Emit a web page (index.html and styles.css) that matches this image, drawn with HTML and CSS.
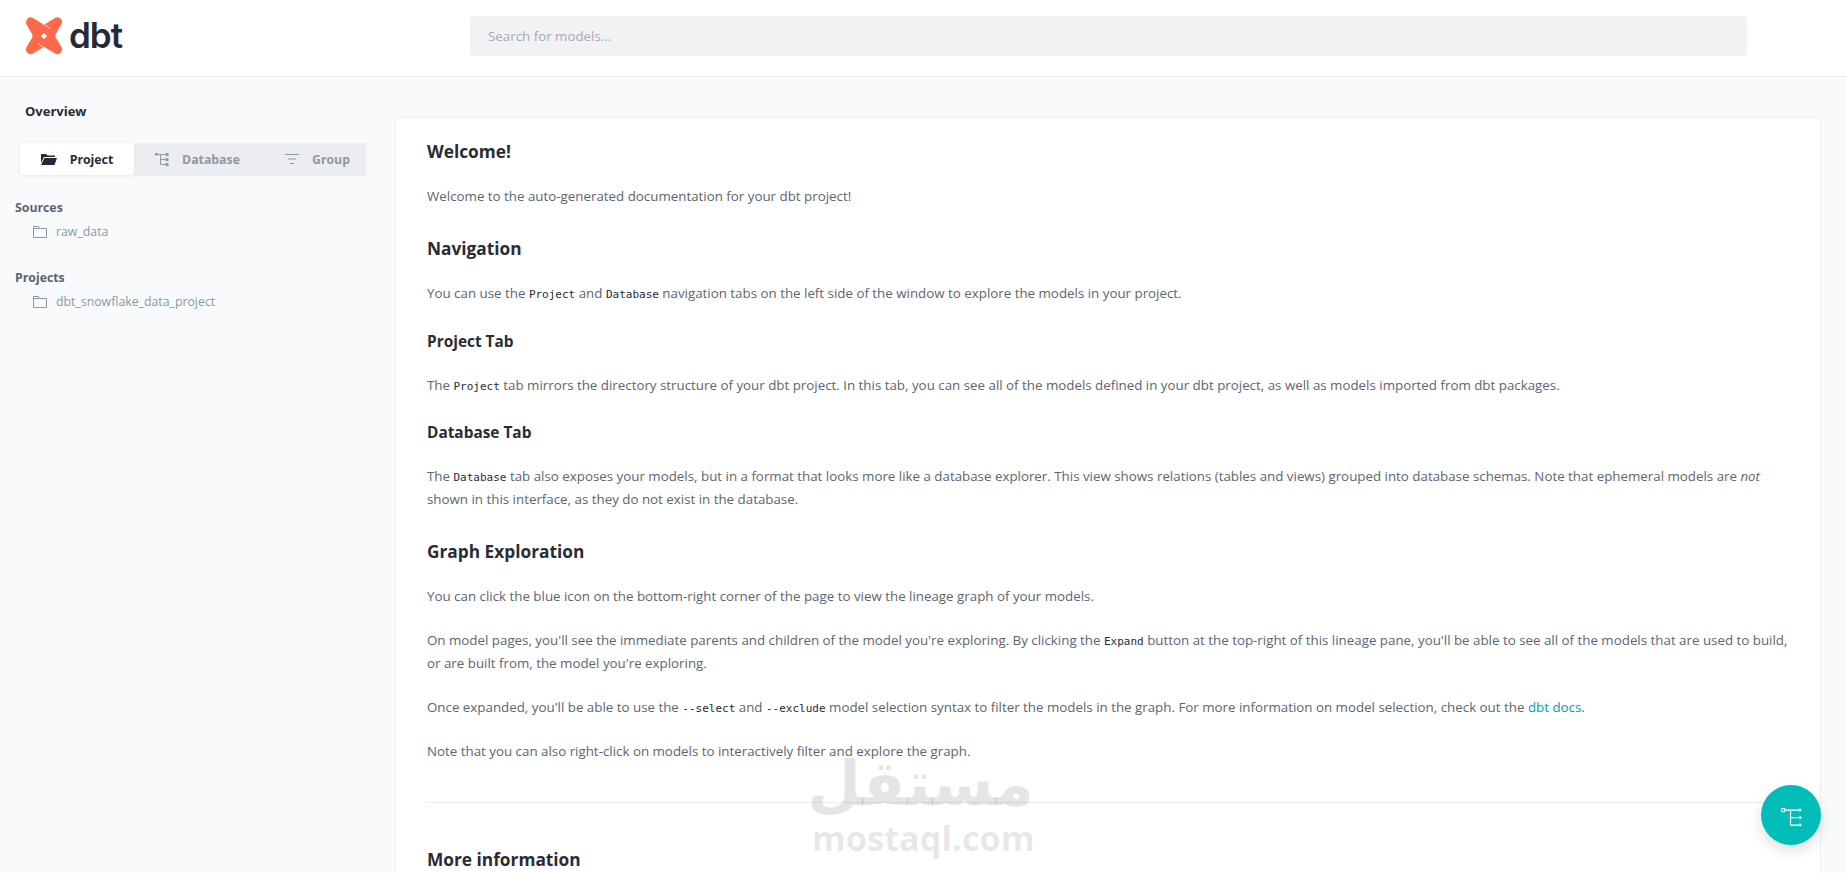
FILE: index.html
```html
<!DOCTYPE html>
<html lang="en">
<head>
    <meta charset="UTF-8">
    <meta name="viewport" content="width=device-width, initial-scale=1.0">
    <title>dbt Docs</title>
    <link rel="stylesheet" href="styles.css">
</head>
<body>
    <div class="app">
        <header class="topbar">
            <div class="brand">
                <svg class="brand-mark" viewBox="0 0 38 38" width="38" height="38">
                    <path fill="#ff694a" d="M3 1Q5.500-.5 8 1L17 6.500Q19 7.500 21 6.500L30 1Q33-.5 35.500 1.500 38 4 36.500 7L31 16.500Q30 19 31 21L36.500 30Q38 33.500 35.500 36 33 38 30 36.500L21 31Q19 30 17 31L8 36.500Q5 38 2.500 36 0 33.500 1.500 30L7 21Q8 19 7 17L1.500 7.500Q0 4 3 1Z"/>
                    <path fill="none" stroke="#fff" stroke-width=".9" d="M17 6.500Q22 8.500 25 11.500M21 31.500Q16 29.500 13 26.500"/>
                    <rect x="16.800" y="16.800" width="4.400" height="4.400" fill="#fff" transform="rotate(45 19 19)"/>
                </svg>
                <span class="brand-name">dbt</span>
            </div>
            <div class="search">Search for models...</div>
        </header>

        <div class="layout">
            <aside class="sidebar">
                <h5 class="overview">Overview</h5>
                <div class="tabs">
                    <div class="tab active">
                        <svg viewBox="0 0 16 12" width="16" height="12"><path fill="#262a38" d="M0 1h5l1.500 1.500H14V4H3L0 10z"/><path fill="#262a38" d="M3.500 5H16l-2.500 7H0z"/></svg>
                        <span>Project</span>
                    </div>
                    <div class="tab">
                        <svg viewBox="0 0 14 13" width="14" height="13"><g fill="none" stroke="#8c9aa3"><path d="M2 1.500h8M5.500 1.500v10h5M5.500 6.500h5"/></g><g fill="#8c9aa3"><rect y="0" width="2.500" height="2.500"/><rect x="10.500" y="0" width="3" height="3"/><rect x="10.500" y="5" width="3" height="3"/><rect x="10.500" y="10" width="3" height="3"/></g></svg>
                        <span>Database</span>
                    </div>
                    <div class="tab">
                        <svg viewBox="0 0 14 10" width="14" height="10"><g fill="none" stroke="#8c9aa3"><path d="M0 .5h14M3 5h8M5 9.500h4"/></g></svg>
                        <span>Group</span>
                    </div>
                </div>

                <div class="tree">
                    <h6 class="tree-title">Sources</h6>
                    <div class="tree-item">
                        <svg viewBox="0 0 14 12" width="14" height="12"><path fill="none" stroke="#8f98a3" d="M.5 11.500V.5h5l1 2h7v9z M.5 2.500h6"/></svg>
                        <span>raw_data</span>
                    </div>
                    <h6 class="tree-title second">Projects</h6>
                    <div class="tree-item">
                        <svg viewBox="0 0 14 12" width="14" height="12"><path fill="none" stroke="#8f98a3" d="M.5 11.500V.5h5l1 2h7v9z M.5 2.500h6"/></svg>
                        <span>dbt_snowflake_data_project</span>
                    </div>
                </div>
            </aside>

            <main class="doc">
                <h2>Welcome!</h2>
                <p>Welcome to the auto-generated documentation for your dbt project!</p>
                <h2>Navigation</h2>
                <p>You can use the <code>Project</code> and <code>Database</code> navigation tabs on the left side of the window to explore the models in your project.</p>
                <h3>Project Tab</h3>
                <p>The <code>Project</code> tab mirrors the directory structure of your dbt project. In this tab, you can see all of the models defined in your dbt project, as well as models imported from dbt packages.</p>
                <h3>Database Tab</h3>
                <p>The <code>Database</code> tab also exposes your models, but in a format that looks more like a database explorer. This view shows relations (tables and views) grouped into database schemas. Note that ephemeral models are <em>not</em> shown in this interface, as they do not exist in the database.</p>
                <h2>Graph Exploration</h2>
                <p>You can click the blue icon on the bottom-right corner of the page to view the lineage graph of your models.</p>
                <p>On model pages, you'll see the immediate parents and children of the model you're exploring. By clicking the <code>Expand</code> button at the top-right of this lineage pane, you'll be able to see all of the models that are used to build, or are built from, the model you're exploring.</p>
                <p>Once expanded, you'll be able to use the <code>--select</code> and <code>--exclude</code> model selection syntax to filter the models in the graph. For more information on model selection, check out the <a href="#">dbt docs</a>.</p>
                <p>Note that you can also right-click on models to interactively filter and explore the graph.</p>
                <hr>
                <h2>More information</h2>
            </main>
        </div>

        <div class="watermark">
            <div class="watermark-ar" lang="ar" dir="rtl">مستقل</div>
            <div class="watermark-en">mostaql.com</div>
        </div>

        <button class="fab">
            <svg viewBox="0 0 21 19" width="21" height="19"><g fill="none" stroke="#fff" stroke-width="1.200"><rect x=".6" y=".6" width="3" height="3"/><path d="M3.600 2.100h15M9.500 2.100v15h9M9.500 9.600h9"/></g><path fill="#fff" d="M18.500 0l2.500 2.100-2.500 2.100zM18.500 7.500l2.500 2.100-2.500 2.100zM18.500 15l2.500 2.100-2.500 2.100z"/></svg>
        </button>
    </div>
</body>
</html>
```

FILE: styles.css
```css
* {
    box-sizing: border-box;
}

html, body {
    margin: 0;
    height: 100%;
    overflow: hidden;
}

body {
    font-family: "Open Sans", sans-serif;
    font-size: 13.33px;
    color: #5e6570;
    background: #f9fafc;
}

.app {
    height: 100vh;
    overflow: hidden;
}

/* top bar */
.topbar {
    display: flex;
    align-items: center;
    height: 77px;
    padding-bottom: 5px;
    background: #fff;
    border-bottom: 1px solid #ebedf0;
}

.brand {
    display: flex;
    align-items: center;
    gap: 6px;
    width: 470px;
    padding-left: 25px;
}

.brand-name {
    font-family: "Inter", sans-serif;
    font-size: 35px;
    font-weight: 600;
    letter-spacing: -1px;
    line-height: 1;
    color: #262a38;
}

.search {
    width: 1277px;
    height: 40px;
    line-height: 40px;
    padding-left: 18px;
    background: #f1f2f4;
    border-radius: 4px;
    color: #a6abb3;
}

/* left column */
.layout {
    display: flex;
    align-items: flex-start;
}

.sidebar {
    width: 395px;
    flex: none;
    padding: 25px 0 0 15px;
}

.overview {
    margin: 0 0 22px 10px;
    font-size: 13px;
    line-height: 19px;
    font-weight: 700;
    color: #262a38;
}

.tabs {
    display: flex;
    width: 346px;
    height: 32px;
    margin-left: 5px;
}

.tab {
    display: flex;
    align-items: center;
    justify-content: center;
    gap: 13px;
    background: #ecedf0;
    color: #8c9aa3;
    font-weight: 700;
    font-size: 12.3px;
    box-shadow: 0 1px 3px rgba(0, 0, 0, .05);
}

.tab:nth-child(1) {
    width: 114px;
}

.tab:nth-child(2) {
    width: 128px;
    border-right: 1px solid #f5f6f8;
}

.tab:nth-child(3) {
    width: 104px;
    padding-left: 7px;
}

.tab.active {
    background: #fff;
    color: #262a38;
    border-radius: 3px;
    box-shadow: 0 1px 4px rgba(0, 0, 0, .08);
}

.tree {
    margin-top: 23px;
}

.tree-title {
    margin: 0;
    font-size: 12.3px;
    line-height: 19px;
    font-weight: 700;
    color: #5b6470;
}

.tree-title.second {
    margin-top: 27px;
}

.tree-item {
    display: flex;
    align-items: center;
    gap: 9px;
    margin: 5px 0 0 18px;
    line-height: 19px;
    font-size: 12.3px;
    color: #7f9ea3;
}

/* doc card */
.doc {
    width: 1426px;
    height: 900px;
    flex: none;
    margin-top: 40px;
    padding: 21px 31px 0;
    background: #fff;
    border: 1px solid #eff0f2;
    border-radius: 3px;
    line-height: 23px;
}

.doc h2 {
    margin: 28px 0 21px;
    font-size: 17.3px;
    line-height: 25px;
    font-weight: 700;
    color: #2a2c35;
}

.doc h2:first-child {
    margin-top: 0;
}

.doc h3 {
    margin: 25.7px 0 21px;
    font-size: 15.4px;
    line-height: 22px;
    font-weight: 700;
    color: #2a2c35;
}

.doc p {
    margin: 0 0 21px;
}

.doc code {
    font-family: "DejaVu Sans Mono", monospace;
    font-size: 11px;
    line-height: 1;
    color: #262a38;
}

.doc a {
    color: #00a3a3;
    text-decoration: none;
}

.doc hr {
    margin: 39px 0 44px;
    border: 0;
    border-top: 1px solid #ebedf0;
}

/* these two float over the page */
.watermark {
    position: absolute;
    left: 812px;
    top: 749px;
    width: 222px;
    text-align: center;
    color: rgba(0, 0, 0, .1);
    pointer-events: none;
}

.watermark-ar {
    font-family: "DejaVu Sans", sans-serif;
    font-size: 62px;
    font-weight: 700;
    line-height: 70px;
}

.watermark-en {
    font-family: "Open Sans", sans-serif;
    font-size: 34.4px;
    font-weight: 700;
    line-height: 38px;
}

.fab {
    position: absolute;
    left: 1761px;
    top: 785px;
    display: flex;
    align-items: center;
    justify-content: center;
    width: 60px;
    height: 60px;
    padding: 4px 0 0;
    border: 0;
    border-radius: 50%;
    background: #00bdb8;
    box-shadow: 0 6px 14px rgba(0, 0, 0, .12);
}
```
